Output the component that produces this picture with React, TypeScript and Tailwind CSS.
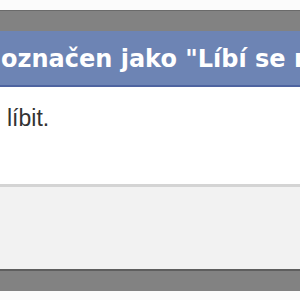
export default function App() {
  return (
    <div className="flex h-[300px] w-[300px] flex-col overflow-hidden bg-white font-['DejaVu_Sans',sans-serif]">
      <div className="h-[10px] shrink-0 bg-[#fbfbfb]" />
      <div className="h-[21px] shrink-0 border-t border-[#6a6a6a] bg-[#828282]" />
      <div className="flex h-[56px] shrink-0 items-center overflow-hidden whitespace-nowrap border-b-2 border-[#4e64a0] bg-[#6d84b4] pl-[1px] pt-[2px] text-[24px] font-bold text-white">
        označen jako "Líbí se mi"
      </div>
      <div className="h-[97px] shrink-0 bg-white pl-[7px] pt-[18px] font-['Liberation_Sans',sans-serif] text-[23px] leading-[26px] text-[#333333]">
        líbit.
      </div>
      <div className="h-[85px] shrink-0 border-t-[3px] border-[#d4d4d4] bg-[#f2f2f2]" />
      <div className="h-[22px] shrink-0 border-t-2 border-[#5e5e5e] bg-[#828282]" />
      <div className="flex-1 bg-[#fbfbfb]" />
    </div>
  );
}
